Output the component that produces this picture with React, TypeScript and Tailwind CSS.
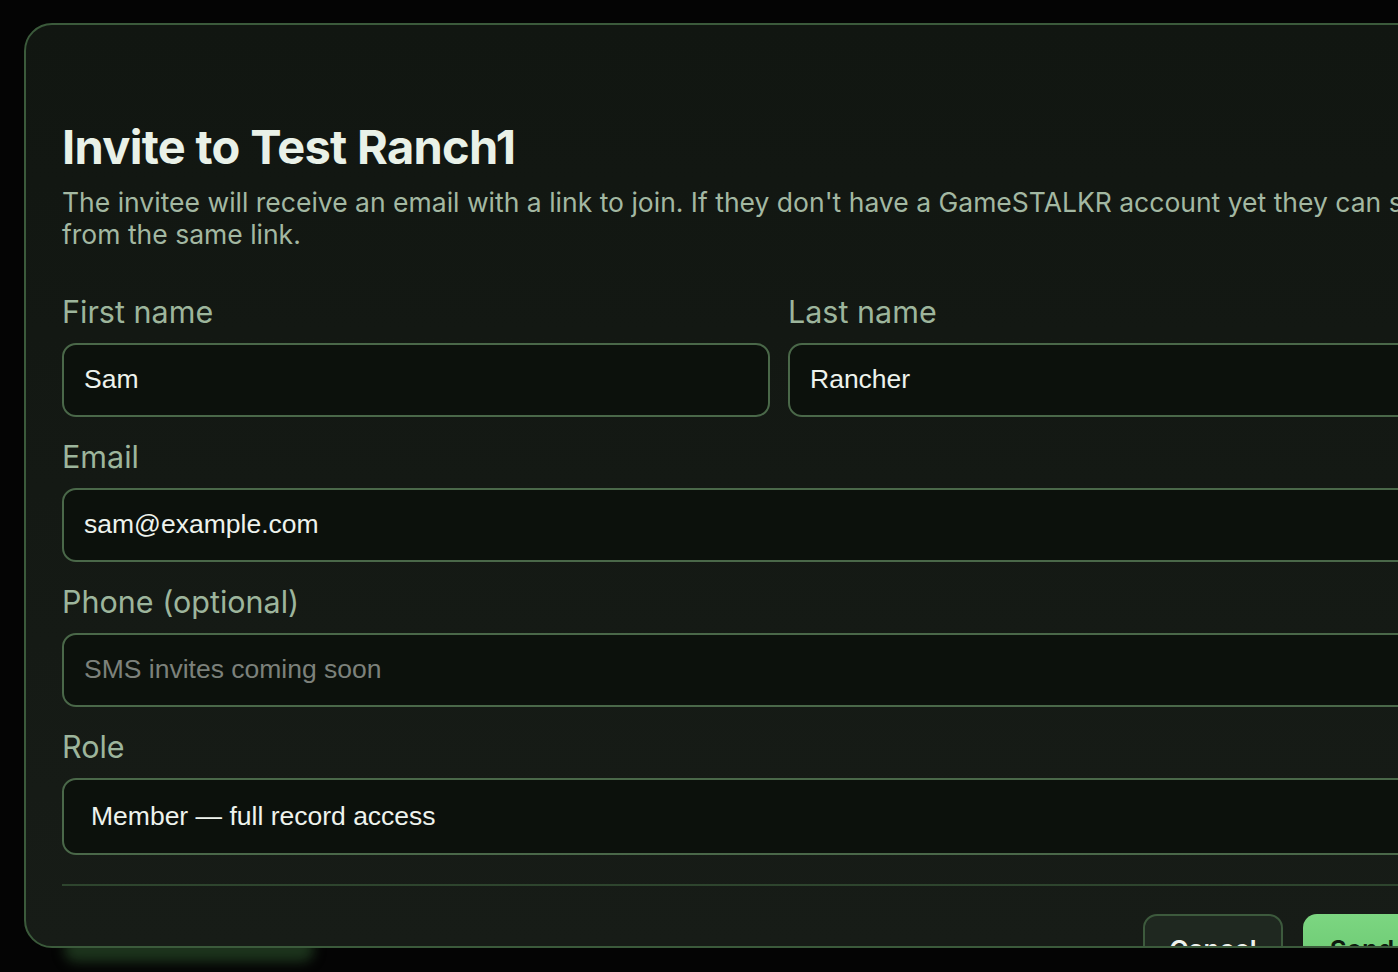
const inter = { fontFamily: "Inter, 'Noto Sans', sans-serif" };
const sans = { fontFamily: "'Liberation Sans', Arial, sans-serif" };

function Field({ label, children }: { label: string; children: React.ReactNode }) {
  return (
    <div className="flex flex-col">
      <label className="text-[30.5px] leading-[36px] text-[#9db59c] mb-[13px]" style={inter}>
        {label}
      </label>
      {children}
    </div>
  );
}

function TextInput({ value, placeholder }: { value?: string; placeholder?: string }) {
  return (
    <div className="h-[74px] rounded-[14px] border-2 border-[#4a6849] bg-[#0c110c] flex items-center px-[20px]">
      <span className={`text-[26.5px] ${value ? "text-[#eef3ed]" : "text-[#7c817b]"}`} style={sans}>
        {value ?? placeholder}
      </span>
    </div>
  );
}

export default function App() {
  return (
    <div className="relative w-[1398px] h-[972px] overflow-hidden bg-[#040404]">
      {/* faint page content behind the backdrop */}
      <div className="absolute left-[64px] top-[936px] w-[250px] h-[26px] rounded-[14px] bg-[#1c331c] blur-[6px]" />

      <div className="relative ml-[24px] mt-[23px] w-[1512px] h-[925px] rounded-[28px] border-2 border-[#3b5a3b] bg-gradient-to-b from-[#111611] to-[#171c17] overflow-hidden">
        <div className="pl-[36px] pr-[38px] pt-[95px]">
          <h2
            className="text-[47px] leading-[53px] font-bold tracking-[-0.7px] text-[#e9f1e8]"
            style={inter}
          >
            Invite to Test Ranch1
          </h2>
          <p className="mt-[13px] text-[26.5px] leading-[32px] text-[#a3b8a2]" style={inter}>
            The invitee will receive an email with a link to join. If they don't have a GameSTALKR account yet they can sign up
            <br />
            from the same link.
          </p>

          <div className="mt-[44px] flex flex-col gap-[22px]">
            <div className="grid grid-cols-2 gap-[18px]">
              <Field label="First name">
                <TextInput value="Sam" />
              </Field>
              <Field label="Last name">
                <TextInput value="Rancher" />
              </Field>
            </div>
            <Field label="Email">
              <TextInput value="sam@example.com" />
            </Field>
            <Field label="Phone (optional)">
              <TextInput placeholder="SMS invites coming soon" />
            </Field>
            <Field label="Role">
              <div className="h-[77px] rounded-[14px] border-2 border-[#4a6849] bg-[#0c110c] flex items-center px-[27px]">
                <span className="text-[26.5px] text-[#eef3ed]" style={sans}>
                  Member — full record access
                </span>
              </div>
            </Field>
          </div>

          <div className="mt-[29px] h-[2px] bg-[#2e452e]" />

          <div className="mt-[28px] flex justify-end gap-[20px]">
            <button
              className="w-[140px] h-[70px] rounded-[14px] border-2 border-[#3d5a3d] bg-[#1f2820] text-[26px] font-semibold text-[#eef3ed]"
              style={inter}
            >
              Cancel
            </button>
            <button
              className="w-[193px] h-[70px] rounded-[14px] bg-gradient-to-b from-[#7cd681] to-[#66c56e] text-[26px] font-semibold text-[#0e1a0e]"
              style={inter}
            >
              Send invite
            </button>
          </div>
        </div>
      </div>
    </div>
  );
}
